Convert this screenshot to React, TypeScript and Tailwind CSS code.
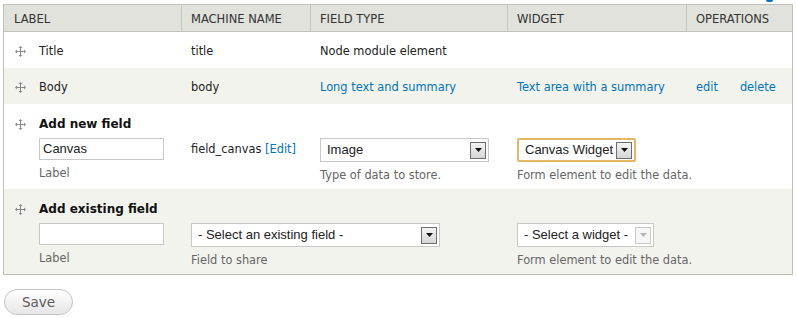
import React from 'react';

const body = { fontFamily: '"DejaVu Sans", Verdana, sans-serif' };
const ctrl = { fontFamily: '"Liberation Sans", Arial, sans-serif' };

const DragHandle: React.FC = () => (
  <svg width="11" height="11" viewBox="0 0 11 11" className="shrink-0">
    <g stroke="#8a8a8a" strokeWidth="1" fill="none">
      <path d="M5.5 1v9M1 5.5h9" />
    </g>
    <g fill="#8a8a8a">
      <path d="M5.5 0l2 2h-4z" />
      <path d="M5.5 11l2-2h-4z" />
      <path d="M0 5.5l2-2v4z" />
      <path d="M11 5.5l-2-2v4z" />
    </g>
  </svg>
);

const Arrow: React.FC<{ disabled?: boolean }> = ({ disabled }) => (
  <span
    className={
      'flex h-[17px] w-[16px] items-center justify-center border ' +
      (disabled
        ? 'border-[#c9c9c9] bg-[#f7f7f7]'
        : 'border-[#6e6e6e] bg-gradient-to-b from-[#f4f4f4] to-[#d6d6d6]')
    }
  >
    <svg width="7" height="4" viewBox="0 0 7 4">
      <path d="M0 0h7L3.5 4z" fill={disabled ? '#b5b5b5' : '#111'} />
    </svg>
  </span>
);

interface SelectProps {
  value: string;
  width: string;
  focused?: boolean;
  disabled?: boolean;
}

const FakeSelect: React.FC<SelectProps> = ({ value, width, focused, disabled }) => (
  <div
    style={ctrl}
    className={
      'flex h-[24px] items-center justify-between bg-white pl-[6px] pr-[2px] text-[13px] text-[#222] ' +
      width +
      (focused ? ' rounded-[2px] border-2 border-[#e3b766]' : ' border border-[#c8c8c8]')
    }
  >
    <span className="whitespace-nowrap">{value}</span>
    <Arrow disabled={disabled} />
  </div>
);

const TextBox: React.FC<{ value?: string }> = ({ value }) => (
  <div
    style={ctrl}
    className="flex h-[22px] w-[125px] items-center border border-[#c8c8c8] bg-white px-[3px] text-[13px] text-[#222]"
  >
    {value}
  </div>
);

const Desc: React.FC<{ children: React.ReactNode }> = ({ children }) => (
  <div className="mt-[5px] h-[16px] whitespace-nowrap leading-[16px] text-[#666]">{children}</div>
);

const cols = 'grid grid-cols-[177px_129px_197px_179px_106px]';

export default function App() {
  return (
    <div style={body} className="h-[318px] w-[796px] bg-white px-[3px] text-[11.4px] text-[#222]">
      <div className="flex h-[4px] justify-end pr-[20px]">
        <span className="h-[2px] w-[7px] rounded-b-sm bg-[#0074bd]" />
      </div>

      <div className="w-[790px] border border-[#bfc0ba]">
        <div className={cols + ' h-[27px] border-b border-[#bfc0ba] bg-[#e1e2dc] text-[11.5px] text-[#333]'}>
          <div className="flex items-center pl-[10px] pt-[3px]">LABEL</div>
          <div className="flex items-center border-l border-[#c6c7c1] pl-[9px] pt-[3px]">MACHINE NAME</div>
          <div className="flex items-center border-l border-[#c6c7c1] pl-[9px] pt-[3px]">FIELD TYPE</div>
          <div className="flex items-center border-l border-[#c6c7c1] pl-[9px] pt-[3px]">WIDGET</div>
          <div className="flex items-center border-l border-[#c6c7c1] pl-[9px] pt-[3px]">OPERATIONS</div>
        </div>

        <div className={cols + ' h-[36px] items-center bg-white pt-[4px]'}>
          <div className="flex items-center gap-[13px] pl-[11px]">
            <DragHandle />
            <span>Title</span>
          </div>
          <div className="pl-[10px]">title</div>
          <div className="pl-[10px]">Node module element</div>
          <div />
          <div />
        </div>

        <div className={cols + ' h-[36px] items-center bg-[#f3f3ee] pt-[4px]'}>
          <div className="flex items-center gap-[13px] pl-[11px]">
            <DragHandle />
            <span>Body</span>
          </div>
          <div className="pl-[10px]">body</div>
          <div className="pl-[10px] text-[#0074bd]">Long text and summary</div>
          <div className="pl-[10px] text-[#0074bd]">Text area with a summary</div>
          <div className="flex gap-[22px] pl-[10px] text-[#0074bd]">
            <span>edit</span>
            <span>delete</span>
          </div>
        </div>

        <div className={cols + ' h-[85px] bg-white'}>
          <div className="pl-[11px] pt-[12px]">
            <div className="flex h-[16px] items-center gap-[13px]">
              <DragHandle />
              <span className="text-[12px] font-bold text-[#111]">Add new field</span>
            </div>
            <div className="mt-[6px] pl-[24px]">
              <TextBox value="Canvas" />
              <Desc>Label</Desc>
            </div>
          </div>
          <div className="pl-[10px] pt-[34px]">
            <div className="h-[22px] leading-[22px]">
              field_canvas <span className="text-[#0074bd]">[Edit]</span>
            </div>
          </div>
          <div className="pl-[10px] pt-[34px]">
            <FakeSelect value="Image" width="w-[169px]" />
            <Desc>Type of data to store.</Desc>
          </div>
          <div className="pl-[10px] pt-[34px]">
            <FakeSelect value="Canvas Widget" width="w-[119px]" focused />
            <Desc>Form element to edit the data.</Desc>
          </div>
          <div />
        </div>

        <div className={cols + ' h-[85px] bg-[#f3f3ee]'}>
          <div className="pl-[11px] pt-[12px]">
            <div className="flex h-[16px] items-center gap-[13px]">
              <DragHandle />
              <span className="text-[12px] font-bold text-[#111]">Add existing field</span>
            </div>
            <div className="mt-[6px] pl-[24px]">
              <TextBox />
              <Desc>Label</Desc>
            </div>
          </div>
          <div className="col-span-2 pl-[10px] pt-[34px]">
            <FakeSelect value="- Select an existing field -" width="w-[249px]" />
            <Desc>Field to share</Desc>
          </div>
          <div className="pl-[10px] pt-[34px]">
            <FakeSelect value="- Select a widget -" width="w-[137px]" disabled />
            <Desc>Form element to edit the data.</Desc>
          </div>
          <div />
        </div>
      </div>

      <button
        className="ml-[1px] mt-[14px] flex h-[26px] w-[69px] items-center justify-center rounded-full border border-[#c4c4c4] bg-gradient-to-b from-white to-[#e6e6e6] text-[13.5px] text-[#5a5a5a]"
      >
        Save
      </button>
    </div>
  );
}
